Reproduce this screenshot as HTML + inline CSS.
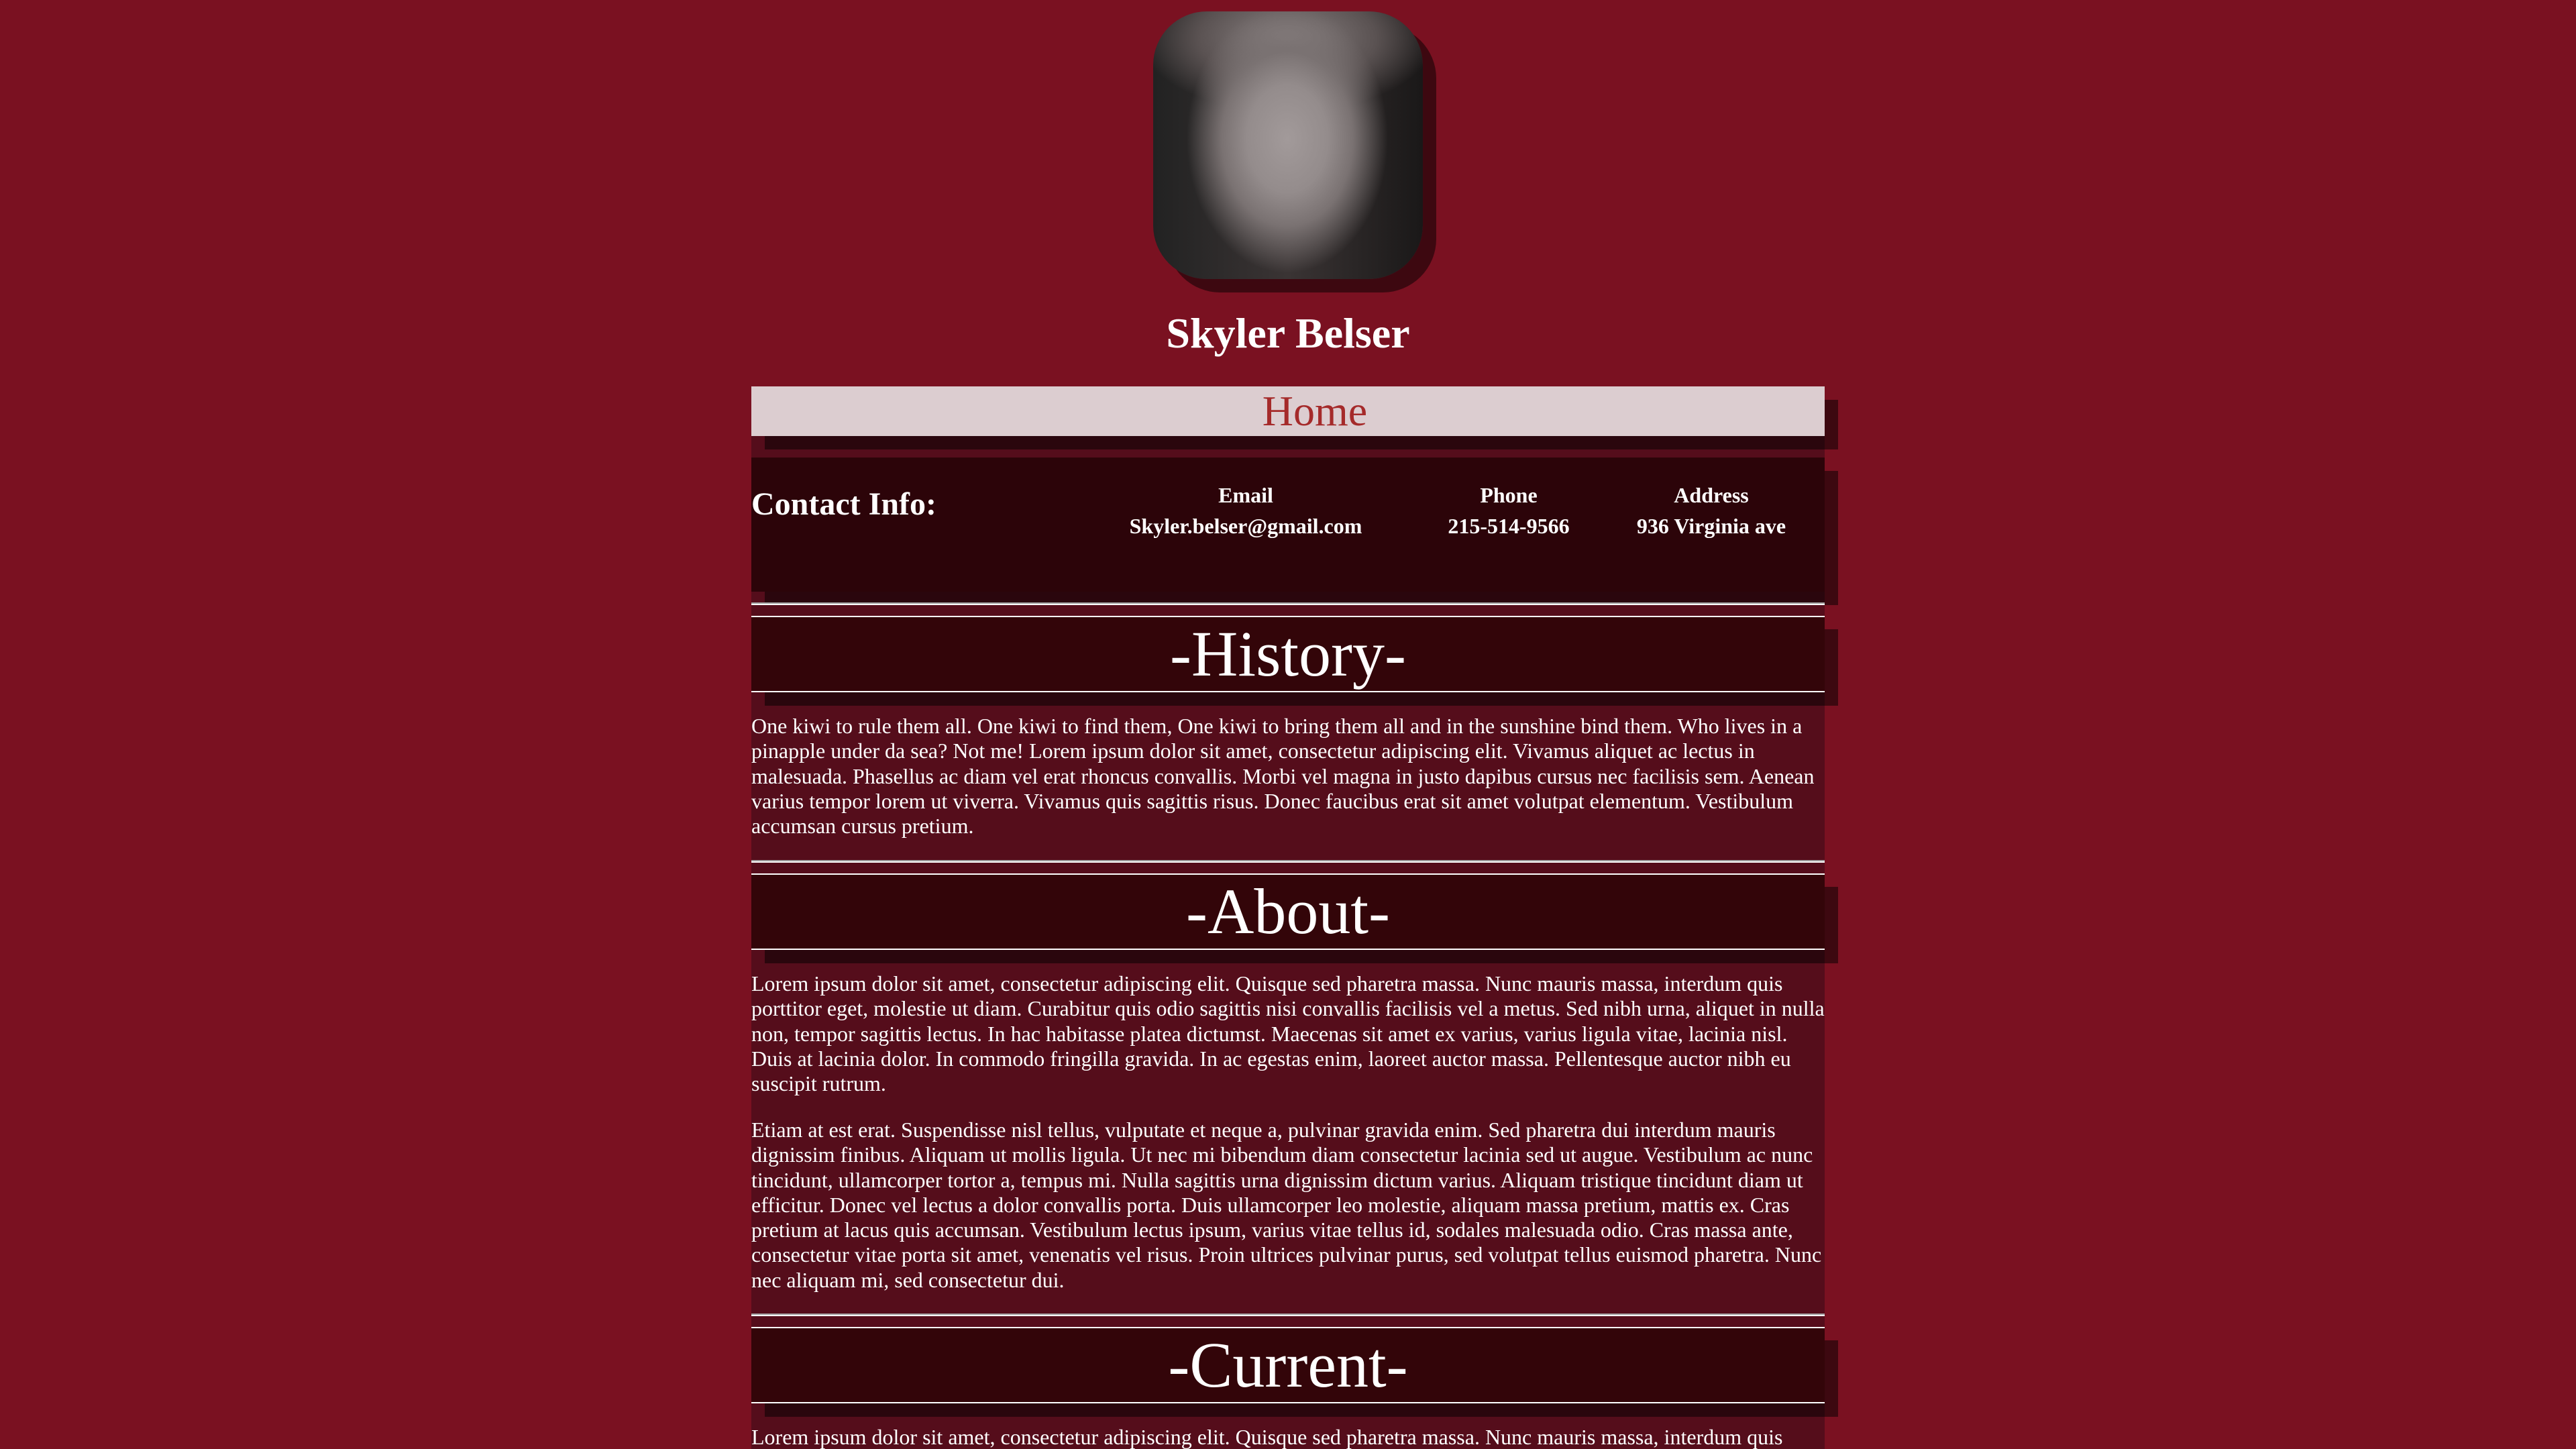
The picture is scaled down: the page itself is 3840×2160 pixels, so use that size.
<!DOCTYPE html>
<html><head><meta charset="utf-8">
<style>
html,body{margin:0;padding:0;overflow:hidden;height:2160px;}
body{width:3840px;height:2160px;overflow:hidden;background:#7a1121;font-family:"Liberation Serif","Times New Roman",serif;color:#fff;position:relative;}
.photo{position:absolute;left:1719px;top:17px;width:402px;height:399px;border-radius:80px;box-shadow:20px 20px 0 rgba(0,0,0,.5);overflow:hidden;
background:radial-gradient(ellipse 150px 200px at 200px 190px,#a29a9a 0%,#948c8c 40%,#7a7272 65%,rgba(40,36,36,0) 100%),
radial-gradient(ellipse 220px 110px at 200px 40px,#8a8282 0%,#5a5252 60%,rgba(30,28,28,0) 100%),
linear-gradient(90deg,#222 0%,#3a3434 50%,#1a1818 100%);}
.name{position:absolute;left:0;width:3840px;top:458px;text-align:center;font-size:64px;font-weight:bold;line-height:78px;margin:0;}
.col{position:absolute;left:1120px;top:576px;width:1600px;height:1584px;background:#550d1b;overflow:visible;}
.home{position:absolute;left:0;top:0;width:1600px;height:74px;background:#dccdd0;box-shadow:20px 20px 0 rgba(0,0,0,.5);color:#a52a2a;font-size:64px;text-align:center;line-height:74px;}
.home span{position:relative;left:40px;}
.contact{position:absolute;left:0;top:106px;width:1600px;height:200px;background:#2c0409;box-shadow:20px 20px 0 rgba(0,0,0,.5);}
.contact h2{position:absolute;left:0;margin:0;font-size:48px;line-height:56px;}
.contact .c{position:absolute;text-align:center;font-weight:bold;font-size:32px;line-height:46px;white-space:nowrap;transform:translateX(-50%);}
.hr{position:absolute;left:0;width:1600px;height:2px;background:#a0a0a0;border-bottom:2px solid #fff;}
.sec{position:absolute;left:0;width:1600px;height:110px;background:#330509;border-top:2px solid #fff;border-bottom:2px solid #fff;box-shadow:20px 20px 0 rgba(0,0,0,.5);text-align:center;font-size:96px;line-height:110px;}
p{position:absolute;left:0;width:1600px;margin:0;font-size:32px;line-height:37.3px;}
</style></head><body>
<div class="photo"></div>
<h1 class="name">Skyler Belser</h1>
<div class="col">
  <div class="home"><span>Home</span></div>
  <div class="contact">
    <h2 style="top:42px">Contact Info:</h2>
    <div class="c" style="left:737px;top:33px">Email<br>Skyler.belser@gmail.com</div>
    <div class="c" style="left:1129px;top:33px">Phone<br>215-514-9566</div>
    <div class="c" style="left:1431px;top:33px">Address<br>936 Virginia ave</div>
  </div>
  <div class="hr" style="top:322px"></div>
  <div class="sec" style="top:342px">-History-</div>
  <p style="top:488px">One kiwi to rule them all. One kiwi to find them, One kiwi to bring them all and in the sunshine bind them. Who lives in a pinapple under da sea? Not me! Lorem ipsum dolor sit amet, consectetur adipiscing elit. Vivamus aliquet ac lectus in malesuada. Phasellus ac diam vel erat rhoncus convallis. Morbi vel magna in justo dapibus cursus nec facilisis sem. Aenean varius tempor lorem ut viverra. Vivamus quis sagittis risus. Donec faucibus erat sit amet volutpat elementum. Vestibulum accumsan cursus pretium.</p>
  <div class="hr" style="top:706px"></div>
  <div class="sec" style="top:726px">-About-</div>
  <p style="top:872px">Lorem ipsum dolor sit amet, consectetur adipiscing elit. Quisque sed pharetra massa. Nunc mauris massa, interdum quis porttitor eget, molestie ut diam. Curabitur quis odio sagittis nisi convallis facilisis vel a metus. Sed nibh urna, aliquet in nulla non, tempor sagittis lectus. In hac habitasse platea dictumst. Maecenas sit amet ex varius, varius ligula vitae, lacinia nisl. Duis at lacinia dolor. In commodo fringilla gravida. In ac egestas enim, laoreet auctor massa. Pellentesque auctor nibh eu suscipit rutrum.</p>
  <p style="top:1090px">Etiam at est erat. Suspendisse nisl tellus, vulputate et neque a, pulvinar gravida enim. Sed pharetra dui interdum mauris dignissim finibus. Aliquam ut mollis ligula. Ut nec mi bibendum diam consectetur lacinia sed ut augue. Vestibulum ac nunc tincidunt, ullamcorper tortor a, tempus mi. Nulla sagittis urna dignissim dictum varius. Aliquam tristique tincidunt diam ut efficitur. Donec vel lectus a dolor convallis porta. Duis ullamcorper leo molestie, aliquam massa pretium, mattis ex. Cras pretium at lacus quis accumsan. Vestibulum lectus ipsum, varius vitae tellus id, sodales malesuada odio. Cras massa ante, consectetur vitae porta sit amet, venenatis vel risus. Proin ultrices pulvinar purus, sed volutpat tellus euismod pharetra. Nunc nec aliquam mi, sed consectetur dui.</p>
  <div class="hr" style="top:1382px"></div>
  <div class="sec" style="top:1402px">-Current-</div>
  <p style="top:1548px;height:36px;overflow:hidden">Lorem ipsum dolor sit amet, consectetur adipiscing elit. Quisque sed pharetra massa. Nunc mauris massa, interdum quis porttitor eget, molestie ut diam.</p>
</div>
</body></html>
